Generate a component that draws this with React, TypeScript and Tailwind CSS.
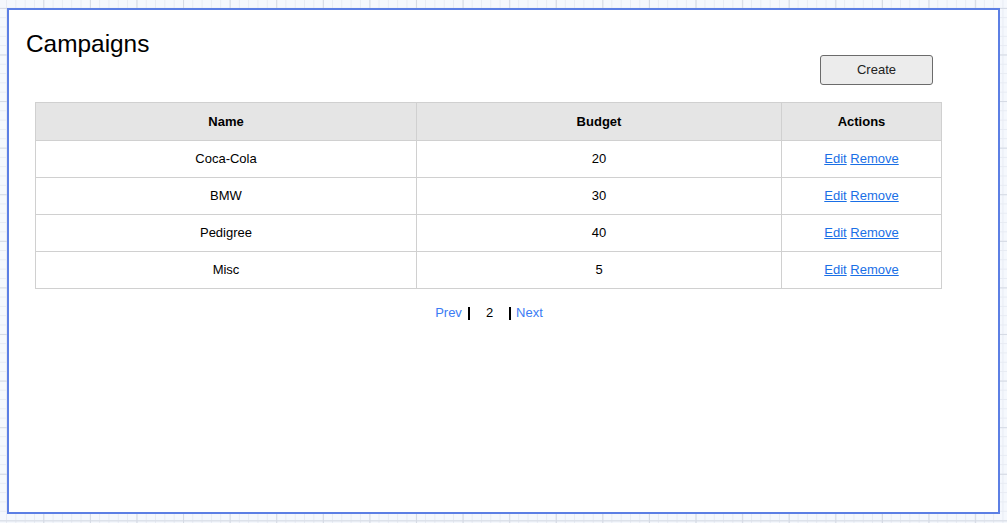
import React from "react";

const rows = [
  { name: "Coca-Cola", budget: "20" },
  { name: "BMW", budget: "30" },
  { name: "Pedigree", budget: "40" },
  { name: "Misc", budget: "5" },
];

export default function App() {
  return (
    <div
      className="w-[1007px] h-[523px] overflow-hidden bg-[#f5f8fd] pt-[8px] pl-[7px] [background-image:linear-gradient(to_right,#d5dae4_1px,transparent_1px),linear-gradient(to_bottom,#d5dae4_1px,transparent_1px),linear-gradient(to_right,#e7ebf3_1px,transparent_1px),linear-gradient(to_bottom,#e7ebf3_1px,transparent_1px)] [background-size:46.6px_46.6px,46.6px_46.6px,9.32px_9.32px,9.32px_9.32px] [background-position:43.3px_7.9px]"
      style={{ fontFamily: '"Liberation Sans", Arial, sans-serif' }}
    >
      <div className="w-[993px] h-[506px] border-2 border-[#5c7fe4] bg-white">
        <div className="flex items-start">
          <h1 className="pl-[17px] pt-[20px] text-[24.4px] leading-[28px] text-black font-normal">
            Campaigns
          </h1>
          <button className="ml-auto mr-[65px] mt-[45px] h-[30px] w-[113px] rounded-[3px] border border-[#6b6b6b] bg-[#ececec] text-[13px] text-[#222]">
            Create
          </button>
        </div>
        <table className="ml-[26px] mt-[17px] w-[906px] table-fixed border-collapse text-[13px] text-black">
          <colgroup>
            <col className="w-[381px]" />
            <col className="w-[365px]" />
            <col className="w-[160px]" />
          </colgroup>
          <thead>
            <tr className="h-[38px] bg-[#e5e5e5]">
              <th className="border border-[#d0d0d0] font-bold">Name</th>
              <th className="border border-[#d0d0d0] font-bold">Budget</th>
              <th className="border border-[#d0d0d0] font-bold">Actions</th>
            </tr>
          </thead>
          <tbody>
            {rows.map((r) => (
              <tr key={r.name} className="h-[37px]">
                <td className="border border-[#d0d0d0] text-center">{r.name}</td>
                <td className="border border-[#d0d0d0] text-center">{r.budget}</td>
                <td className="border border-[#d0d0d0] text-center">
                  <a href="#" className="text-[#1a6fe6] underline">Edit</a>{" "}
                  <a href="#" className="text-[#1a6fe6] underline">Remove</a>
                </td>
              </tr>
            ))}
          </tbody>
        </table>
        <div className="ml-[27px] w-[906px] mt-[16px] flex items-center justify-center text-[13px] leading-[16px]">
          <a href="#" className="text-[#3b7cf4]">Prev</a>
          <span className="ml-[6px] inline-block w-[2px] h-[13px] bg-black" />
          <span className="px-[16px] text-black">2</span>
          <span className="inline-block w-[2px] h-[13px] bg-black" />
          <a href="#" className="ml-[5px] text-[#3b7cf4]">Next</a>
        </div>
      </div>
    </div>
  );
}
